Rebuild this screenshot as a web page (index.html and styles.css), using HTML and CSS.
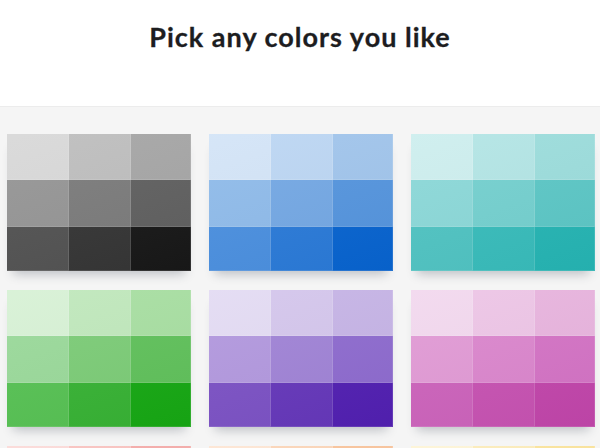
FILE: index.html
```html
<!DOCTYPE html>
<html lang="en">
<head>
<meta charset="utf-8">
<title>Pick any colors you like</title>
<link rel="stylesheet" href="styles.css">
</head>
<body>
<header class="hero">
  <h1 class="title">Pick any colors you like</h1>
</header>
<main class="palettes">
  <div class="card">
    <span class="cell" style="background:#d8d8d8"></span><span class="cell" style="background:#bebebe"></span><span class="cell" style="background:#a6a6a6"></span>
    <span class="cell" style="background:#959595"></span><span class="cell" style="background:#7b7b7b"></span><span class="cell" style="background:#606060"></span>
    <span class="cell" style="background:#525252"></span><span class="cell" style="background:#353535"></span><span class="cell" style="background:#181818"></span>
  </div>
  <div class="card">
    <span class="cell" style="background:#d3e4f7"></span><span class="cell" style="background:#bcd6f3"></span><span class="cell" style="background:#a1c5ec"></span>
    <span class="cell" style="background:#8fbbea"></span><span class="cell" style="background:#74a8e4"></span><span class="cell" style="background:#5595de"></span>
    <span class="cell" style="background:#4a8fdf"></span><span class="cell" style="background:#2a7ad8"></span><span class="cell" style="background:#0864d0"></span>
  </div>
  <div class="card">
    <span class="cell" style="background:#cdeeee"></span><span class="cell" style="background:#b3e5e5"></span><span class="cell" style="background:#9cdddc"></span>
    <span class="cell" style="background:#8bd8d8"></span><span class="cell" style="background:#74d0cf"></span><span class="cell" style="background:#5cc7c6"></span>
    <span class="cell" style="background:#4fc3c2"></span><span class="cell" style="background:#38bcbb"></span><span class="cell" style="background:#26b5b4"></span>
  </div>
  <div class="card">
    <span class="cell" style="background:#d7f1d5"></span><span class="cell" style="background:#c0e8bc"></span><span class="cell" style="background:#a8dfa2"></span>
    <span class="cell" style="background:#9ad99a"></span><span class="cell" style="background:#7ccc77"></span><span class="cell" style="background:#60c15b"></span>
    <span class="cell" style="background:#56c153"></span><span class="cell" style="background:#37b234"></span><span class="cell" style="background:#17a814"></span>
  </div>
  <div class="card">
    <span class="cell" style="background:#e3dbf3"></span><span class="cell" style="background:#d4c6ec"></span><span class="cell" style="background:#c6b4e6"></span>
    <span class="cell" style="background:#b298de"></span><span class="cell" style="background:#a083d6"></span><span class="cell" style="background:#8e6bcf"></span>
    <span class="cell" style="background:#7b51c4"></span><span class="cell" style="background:#6537ba"></span><span class="cell" style="background:#5220b2"></span>
  </div>
  <div class="card">
    <span class="cell" style="background:#f2d8ee"></span><span class="cell" style="background:#edc5e6"></span><span class="cell" style="background:#e8b4de"></span>
    <span class="cell" style="background:#e19ad5"></span><span class="cell" style="background:#db86cd"></span><span class="cell" style="background:#d473c5"></span>
    <span class="cell" style="background:#cc62bb"></span><span class="cell" style="background:#c752b2"></span><span class="cell" style="background:#c246ab"></span>
  </div>
  <div class="card">
    <span class="cell" style="background:#fbdad8"></span><span class="cell" style="background:#f9c3c0"></span><span class="cell" style="background:#f5acaa"></span>
    <span class="cell" style="background:#f19592"></span><span class="cell" style="background:#ec7c78"></span><span class="cell" style="background:#e6625e"></span>
    <span class="cell" style="background:#e04f4a"></span><span class="cell" style="background:#d9372f"></span><span class="cell" style="background:#d21f16"></span>
  </div>
  <div class="card">
    <span class="cell" style="background:#fde5d3"></span><span class="cell" style="background:#fbd5b8"></span><span class="cell" style="background:#f9c49c"></span>
    <span class="cell" style="background:#f7b27f"></span><span class="cell" style="background:#f5a063"></span><span class="cell" style="background:#f28d45"></span>
    <span class="cell" style="background:#ef7c2c"></span><span class="cell" style="background:#ec6a12"></span><span class="cell" style="background:#e85a00"></span>
  </div>
  <div class="card">
    <span class="cell" style="background:#fdf4d6"></span><span class="cell" style="background:#fcecba"></span><span class="cell" style="background:#fbe49c"></span>
    <span class="cell" style="background:#fadb7e"></span><span class="cell" style="background:#f9d260"></span><span class="cell" style="background:#f8c942"></span>
    <span class="cell" style="background:#f6c02c"></span><span class="cell" style="background:#f5b814"></span><span class="cell" style="background:#f3ae00"></span>
  </div>
</main>
</body>
</html>
```
FILE: styles.css
```css
* { box-sizing: border-box; }
html, body { margin: 0; padding: 0; }
body {
  background: #f5f5f5;
  font-family: Lato, "Open Sans", sans-serif;
  width: 600px;
  overflow: hidden;
}
.hero {
  background: #ffffff;
  height: 107px;
  border-bottom: 1px solid #ececec;
  display: flex;
  justify-content: center;
}
.title {
  margin: 0;
  padding-top: 21px;
  font-size: 27px;
  font-weight: 700;
  color: #1d1d1f;
  letter-spacing: 1px;
  line-height: 32px;
  -webkit-text-stroke: 0.3px #1d1d1f;
}
.palettes {
  display: grid;
  grid-template-columns: repeat(3, 184px);
  column-gap: 18px;
  row-gap: 19px;
  padding: 27px 0 40px 7px;
}
.card {
  height: 137px;
  display: grid;
  grid-template-columns: 62px 62px 60px;
  grid-template-rows: 46px 47px 44px;
  box-shadow: 0 9px 10px -6px rgba(40, 50, 70, 0.28);
  position: relative;
}
.card::after {
  content: "";
  position: absolute;
  inset: 0;
  background: linear-gradient(160deg, rgba(255,255,255,0.06), rgba(0,0,0,0.03));
  pointer-events: none;
}
.cell {
  display: block;
  box-shadow: inset -1px -1px 0 rgba(255, 255, 255, 0.12);
}
```
